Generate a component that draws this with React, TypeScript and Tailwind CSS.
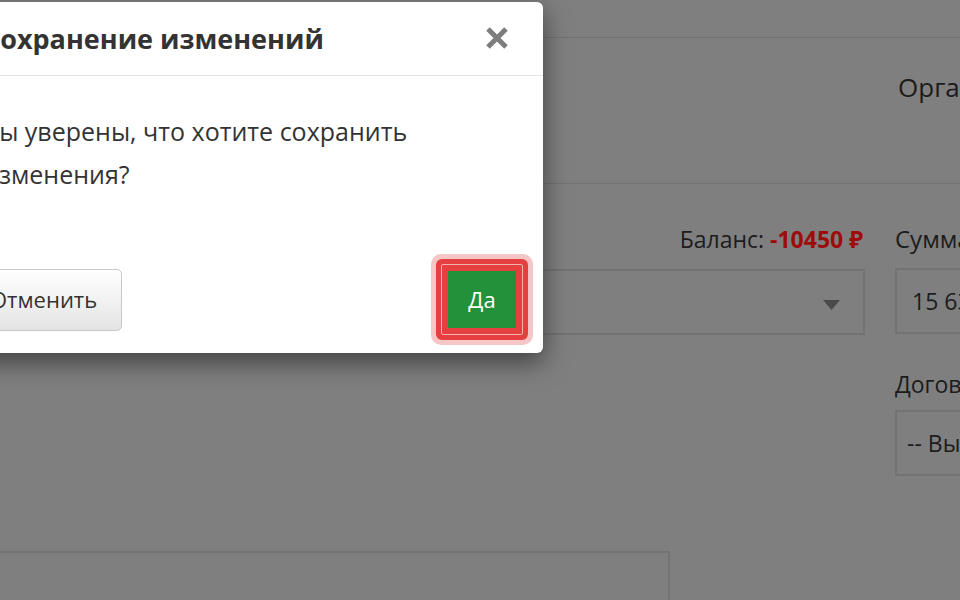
export default function App() {
  return (
    <div className="relative w-[960px] h-[600px] overflow-hidden bg-[#7f7f7f] text-[#1c1c1c] font-['Open_Sans','Noto_Sans',sans-serif]">
      {/* page behind the backdrop */}
      <div className="h-[38px] border-b border-[#727272]" />
      <div className="h-[146px] border-b border-[#727272] pl-[898px] pt-[33px]">
        <div className="whitespace-nowrap text-[26px] leading-[32px]">Организация</div>
      </div>

      <div className="grid grid-cols-[905px_300px] gap-x-[30px] ml-[-40px]">
        <div className="pt-[38px]">
          <div className="h-[34px] text-right text-[23px] leading-[34px] pr-[2px] whitespace-nowrap">
            Баланс: <span className="font-bold text-[#9e0b0b]">-10450 ₽</span>
          </div>
          <div className="mt-[13px] h-[66px] border-2 border-[#737373] flex items-center justify-end pr-[23px]">
            <svg width="17" height="10" viewBox="0 0 17 10" className="mt-[6px]">
              <path d="M0 0 L17 0 L8.5 10 Z" fill="#4a4a4a" />
            </svg>
          </div>
          <div className="mt-[216px] w-[710px] h-[80px] border-2 border-[#737373]" />
        </div>

        <div className="pt-[38px]">
          <div className="h-[34px] text-[24px] leading-[34px] whitespace-nowrap">Сумма</div>
          <div className="mt-[12px] h-[66px] border-2 border-[#737373] flex items-center pl-[15px] text-[23px] whitespace-nowrap">
            15 630
          </div>
          <div className="mt-[33px] h-[34px] text-[23px] leading-[34px] whitespace-nowrap">Договор</div>
          <div className="mt-[9px] h-[66px] border-2 border-[#737373] flex items-center pl-[10px] text-[23px] whitespace-nowrap">
            -- Выберите --
          </div>
        </div>
      </div>

      {/* confirmation dialog */}
      <div className="absolute left-[-45px] top-[2px] w-[588px] rounded-[6px] bg-white shadow-[0_9px_26px_rgba(0,0,0,0.5)] text-[#333]">
        <div className="h-[74px] border-b border-[#e5e5e5] flex items-center justify-between pl-[28px] pr-[34px]">
          <div className="text-[27px] font-bold leading-[36px] whitespace-nowrap">Сохранение изменений</div>
          <svg width="24" height="24" viewBox="0 0 24 24" className="mt-[-2px]">
            <path d="M3 3 L21 21 M21 3 L3 21" stroke="#7d7d7d" strokeWidth="5" />
          </svg>
        </div>
        <div className="pt-[34px] pl-[28px] text-[25px] leading-[43px]">
          Вы уверены, что хотите сохранить
          <br />
          изменения?
        </div>
        <div className="pt-[58px] pb-[8px] pl-[10px] pr-[10px] flex items-center justify-between">
          <button className="h-[62px] px-[24px] rounded-[5px] border border-[#c8c8c8] bg-gradient-to-b from-white to-[#e4e4e4] text-[22px] text-[#333]">
            Отменить
          </button>
          <div className="rounded-[10px] bg-[#f6c6c6] p-[5px]">
            <div className="rounded-[6px] bg-[#e5403f] p-[5px]">
              <div className="rounded-[2px] border border-[#f4b4b4] bg-[#e5403f] p-[6px]">
                <div className="w-[68px] h-[57px] bg-[#22913a] flex items-center justify-center text-[22px] text-white">
                  Да
                </div>
              </div>
            </div>
          </div>
        </div>
      </div>
    </div>
  );
}
